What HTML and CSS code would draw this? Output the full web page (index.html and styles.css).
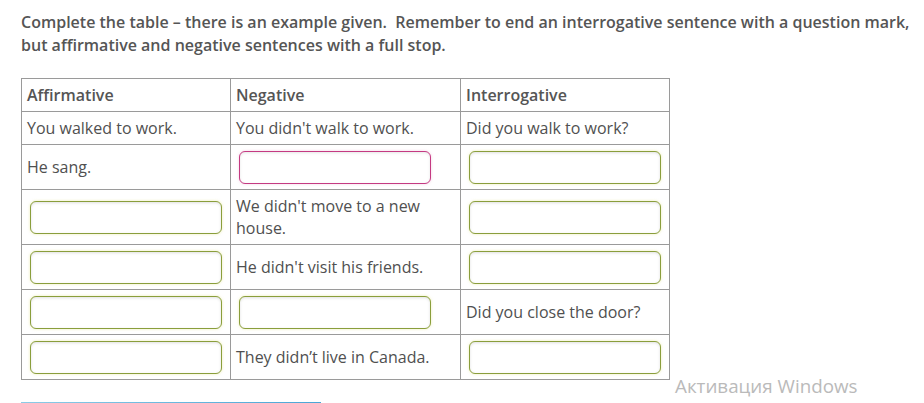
FILE: index.html
```html
<!DOCTYPE html>
<html>
<head>
<meta charset="utf-8">
<link rel="stylesheet" href="styles.css">
</head>
<body>
<div class="page">
  <p class="instructions">Complete the table – there is an example given.&nbsp; Remember to end an interrogative sentence with a question mark, but affirmative and negative sentences with a full stop.</p>
  <table class="grid">
    <colgroup>
      <col class="c1"><col class="c2"><col class="c3">
    </colgroup>
    <tr class="head">
      <th>Affirmative</th><th>Negative</th><th>Interrogative</th>
    </tr>
    <tr class="r-short">
      <td>You walked to work.</td><td>You didn't walk to work.</td><td>Did you walk to work?</td>
    </tr>
    <tr class="r">
      <td>He sang.</td><td><input class="field pink" type="text"></td><td><input class="field" type="text"></td>
    </tr>
    <tr class="r-tall">
      <td><input class="field" type="text"></td><td>We didn't move to a new house.</td><td><input class="field" type="text"></td>
    </tr>
    <tr class="r">
      <td><input class="field" type="text"></td><td>He didn't visit his friends.</td><td><input class="field" type="text"></td>
    </tr>
    <tr class="r">
      <td><input class="field" type="text"></td><td><input class="field" type="text"></td><td>Did you close the door?</td>
    </tr>
    <tr class="r">
      <td><input class="field" type="text"></td><td>They didn’t live in Canada.</td><td><input class="field" type="text"></td>
    </tr>
  </table>
  <div class="button-edge"></div>
</div>
<div class="watermark">Активация Windows</div>
</body>
</html>
```
FILE: styles.css
```css
html, body {
  margin: 0;
  padding: 0;
  background: #ffffff;
}
body {
  font-family: "Open Sans", "Noto Sans", sans-serif;
  color: #4d4d4d;
  width: 924px;
  height: 403px;
  overflow: hidden;
  position: relative;
}
.page {
  padding: 11px 0 0 21px;
}
.instructions {
  margin: 0;
  font-size: 16px;
  line-height: 23px;
  font-weight: 600;
  color: #555555;
  width: 895px;
}
.grid {
  margin-top: 21px;
  border-collapse: collapse;
  table-layout: fixed;
  width: 648px;
  font-size: 16px;
  line-height: 22px;
}
.c1 { width: 209px; }
.c2 { width: 230px; }
.c3 { width: 209px; }
.grid th,
.grid td {
  border: 1px solid #9a9a9a;
  padding: 0 5px;
  text-align: left;
  vertical-align: middle;
  color: #505050;
}
.grid th {
  font-weight: 600;
  color: #555555;
}
.head, .r-short { height: 33px; }
.r { height: 45px; }
.r-tall { height: 55px; }
.field {
  display: block;
  box-sizing: border-box;
  width: 192px;
  height: 33px;
  margin: 0 0 0 3px;
  border: 1px solid #8a9e3c;
  border-radius: 6px;
  background: #ffffff;
  box-shadow: inset 0 1px 3px rgba(0, 0, 0, 0.12), 0 0 3px rgba(230, 230, 150, 0.7);
  outline: none;
  font-family: inherit;
  font-size: 16px;
}
.field.pink {
  border-color: #c43a82;
  box-shadow: inset 0 1px 3px rgba(0, 0, 0, 0.1), 0 0 3px rgba(240, 190, 215, 0.7);
}
.button-edge {
  margin-top: 22px;
  width: 300px;
  height: 2px;
  background: linear-gradient(to right, #8ccbe6, #4aa6d6);
}
.watermark {
  position: absolute;
  left: 675px;
  top: 373px;
  font-family: "Open Sans", "Noto Sans", sans-serif;
  font-size: 18.8px;
  line-height: 26px;
  color: #bababa;
}
```
